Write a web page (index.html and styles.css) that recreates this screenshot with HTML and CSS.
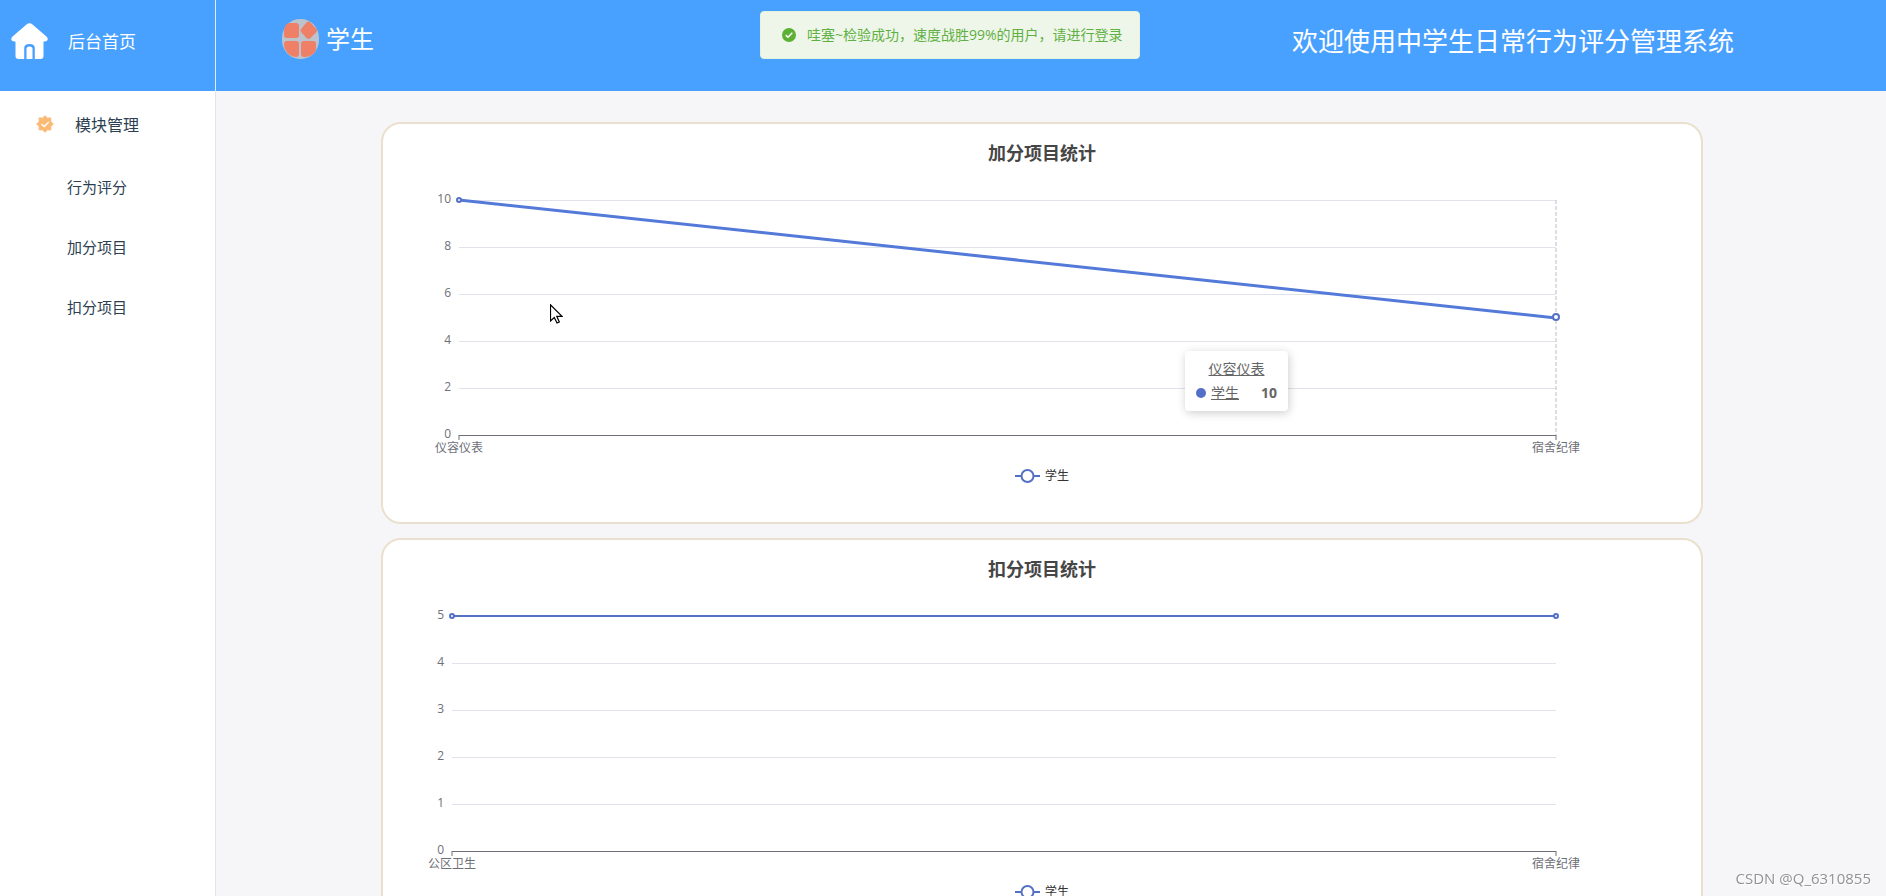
FILE: index.html
```html
<!DOCTYPE html>
<html lang="zh-CN">
<head>
<meta charset="utf-8">
<title>中学生日常行为评分管理系统</title>
<link rel="stylesheet" href="styles.css">
</head>
<body>
<header class="topbar">
  <a class="home" href="#">
    <svg class="home-icon" viewBox="0 0 37 36" aria-hidden="true">
      <path fill="#fff" d="M15.500 1.500Q18.500-1 21.500 1.500L36 14Q38.200 18 34 18.500H32.500V33Q32.500 36 29.500 36H23.800V25Q23.800 21 18.500 21T13.200 25V36H7.500Q4.500 36 4.500 33V18.500H3Q-1.200 18 1 14Z"/>
      <path fill="#fff" d="M15.500 36V26Q15.500 23.500 18.500 23.500T21.500 26V36Z"/>
    </svg>
    <span class="home-text">后台首页</span>
  </a>
  <div class="user">
    <svg class="avatar" viewBox="0 0 37 40" aria-hidden="true">
      <rect width="37" height="40" rx="18" ry="19" fill="#bcc3cc"/>
      <g fill="#ed8066">
        <path d="M7 4H14Q17 4 17 7V16Q17 19 14 19H5Q2 19 2 16V11Q3 5 7 4Z"/>
        <path d="M24.500 3.500Q26.500 1.500 28.500 3.500L34 9.500Q36 11.500 34 13.500L28.500 19Q26.500 21 24.500 19L19.500 13.500Q17.500 11.500 19.500 9.500Z"/>
        <path d="M5 22H14Q17 22 17 25V35Q17 38 14 38Q6 37 3 30Q2 28 2 25Q2 22 5 22Z"/>
        <path d="M22 22H31Q34 22 34 25V31Q31 38 22 38Q19 38 19 35V25Q19 22 22 22Z"/>
      </g>
    </svg>
    <span class="user-name">学生</span>
  </div>
  <h1 class="welcome">欢迎使用中学生日常行为评分管理系统</h1>
</header>

<div class="layout">
  <nav class="sidebar">
    <div class="menu-title">
      <svg class="badge-icon" viewBox="0 0 18 18" aria-hidden="true">
        <path fill="#fab974" stroke="#fab974" stroke-linejoin="round" d="M9 .7 11.200 3.200 14.600 2.900 14.800 6.500 17.300 9 14.800 11.500 14.900 14.900 11.400 14.800 9 17.300 6.600 14.800 3.100 14.900 3.200 11.500.7 9 3.200 6.500 3.100 2.900 6.700 3.200Z"/>
        <path fill="none" stroke="#fff" stroke-width="1.400" d="m5.500 9 2.700 2.600 4.600-4.500"/>
      </svg>
      <span>模块管理</span>
    </div>
    <a class="menu-item" href="#">行为评分</a>
    <a class="menu-item" href="#">加分项目</a>
    <a class="menu-item" href="#">扣分项目</a>
  </nav>

  <main class="content">
    <section class="card">
      <h2 class="card-title">加分项目统计</h2>
      <div class="plot">
        <svg class="chart" aria-label="加分项目统计">
          <g class="grid-line">
            <line x2="100%" y1="0.5" y2="0.5"/><line x2="100%" y1="47.5" y2="47.5"/><line x2="100%" y1="94.5" y2="94.5"/><line x2="100%" y1="141.5" y2="141.5"/><line x2="100%" y1="188.5" y2="188.5"/>
          </g>
          <g class="axis-line"><line x2="100%" y1="235.5" y2="235.5"/><line x1="0" x2="0" y1="235" y2="240"/><line x1="100%" x2="100%" y1="235" y2="240"/></g>
          <line class="pointer-line" x1="100%" x2="100%" y1="0" y2="235"/>
          <g class="y-label"><text x="-8" y="3">10</text><text x="-8" y="50">8</text><text x="-8" y="97">6</text><text x="-8" y="144">4</text><text x="-8" y="191">2</text><text x="-8" y="238">0</text></g>
          <g class="x-label"><text x="0" y="252">仪容仪表</text><text x="100%" y="252">宿舍纪律</text></g>
          <line class="series series-active" x1="0" x2="100%" y1="0" y2="118"/>
          <circle class="point" cx="0" cy="0" r="2"/>
          <circle class="point" cx="100%" cy="117" r="3"/>
        </svg>
        <div class="tooltip">
          <div class="tooltip-title">仪容仪表</div>
          <div class="tooltip-row"><span class="dot"></span><span class="tooltip-name">学生</span><b>10</b></div>
        </div>
        <svg class="cursor" viewBox="0 0 13 20" aria-hidden="true"><path fill="#fff" stroke="#000" stroke-width="1.200" d="M.5.800V17L4.300 13.500 7 19 9.300 18 6.800 12.300H12Z"/></svg>
      </div>
      <div class="legend">
        <svg class="legend-icon" viewBox="0 0 25 14" aria-hidden="true"><path d="M0 7H25"/><circle cx="12.500" cy="7" r="6"/></svg>
        <span>学生</span>
      </div>
    </section>

    <section class="card">
      <h2 class="card-title">扣分项目统计</h2>
      <div class="plot plot-narrow-axis">
        <svg class="chart" aria-label="扣分项目统计">
          <g class="grid-line">
            <line x2="100%" y1="0.5" y2="0.5"/><line x2="100%" y1="47.5" y2="47.5"/><line x2="100%" y1="94.5" y2="94.5"/><line x2="100%" y1="141.5" y2="141.5"/><line x2="100%" y1="188.5" y2="188.5"/>
          </g>
          <g class="axis-line"><line x2="100%" y1="235.5" y2="235.5"/><line x1="0" x2="0" y1="235" y2="240"/><line x1="100%" x2="100%" y1="235" y2="240"/></g>
          <g class="y-label"><text x="-8" y="3">5</text><text x="-8" y="50">4</text><text x="-8" y="97">3</text><text x="-8" y="144">2</text><text x="-8" y="191">1</text><text x="-8" y="238">0</text></g>
          <g class="x-label"><text x="0" y="252">公区卫生</text><text x="100%" y="252">宿舍纪律</text></g>
          <line class="series" x1="0" x2="100%" y1="0" y2="0"/>
          <circle class="point" cx="0" cy="0" r="2"/>
          <circle class="point" cx="100%" cy="0" r="2"/>
        </svg>
      </div>
      <div class="legend">
        <svg class="legend-icon" viewBox="0 0 25 14" aria-hidden="true"><path d="M0 7H25"/><circle cx="12.500" cy="7" r="6"/></svg>
        <span>学生</span>
      </div>
    </section>
  </main>
</div>

<div class="toast" role="alert">
  <svg class="toast-icon" viewBox="0 0 14 14" aria-hidden="true"><circle cx="7" cy="7" r="7" fill="#5cb135"/><path fill="none" stroke="#fff" stroke-width="1.500" d="m3.700 7.100 2.300 2.200 4.300-4.500"/></svg>
  <span>哇塞~检验成功，速度战胜99%的用户，请进行登录</span>
</div>
<div class="watermark">CSDN @Q_6310855</div>
</body>
</html>
```

FILE: styles.css
```css
* {
  box-sizing: border-box;
}

body {
  margin: 0;
  height: 100vh;
  display: flex;
  flex-direction: column;
  overflow: hidden;
  background: #f6f6f9;
  color: #2c3e50;
  font-family: "Open Sans", "Noto Sans CJK SC", sans-serif;
  font-size: 14px;
}

a {
  color: inherit;
  text-decoration: none;
}

h1,
h2 {
  margin: 0;
}

svg {
  display: block;
  flex: none;
}

.topbar {
  flex: none;
  display: flex;
  height: 91px;
  background: #48a0ff;
  color: #fff;
}

.home {
  display: flex;
  align-items: center;
  gap: 20px;
  width: 216px;
  padding: 0 0 9px 11px;
  border-right: 1px solid #dcecff;
  font-size: 17px;
}

.home-text {
  padding-bottom: 2px;
}

.home-icon {
  width: 37px;
  height: 36px;
}

.user {
  display: flex;
  align-items: center;
  gap: 7px;
  padding: 0 0 13px 66px;
  font-size: 24px;
}

.user-name {
  padding-bottom: 4px;
}

.avatar {
  width: 37px;
  height: 40px;
}

.welcome {
  margin-left: auto;
  padding-right: 152px;
  font-size: 26px;
  font-weight: 400;
  line-height: 82px;
  white-space: nowrap;
}

.layout {
  flex: 1;
  display: flex;
  min-height: 0;
}

.sidebar {
  flex: none;
  width: 216px;
  background: #fff;
  border-right: 1px solid #e4e4e8;
}

.menu-title {
  display: flex;
  align-items: center;
  gap: 21px;
  height: 66px;
  padding-left: 36px;
  font-size: 16px;
}

.badge-icon {
  width: 18px;
  height: 18px;
}

.menu-item {
  display: block;
  padding-left: 67px;
  font-size: 15px;
  line-height: 60px;
}

.content {
  flex: 1;
  display: flex;
  flex-direction: column;
  gap: 14px;
  padding: 31px 183px 0 165px;
  overflow: hidden;
}

.card {
  flex: none;
  padding: 17px 0 39px;
  background: #fff;
  border: 2px solid #ebe0cd;
  border-radius: 20px;
}

.card-title {
  color: #464646;
  font-size: 18px;
  font-weight: 700;
  line-height: 24px;
  text-align: center;
}

.plot {
  position: relative;
  margin: 35px 145px 33px 76px;
}

.plot-narrow-axis {
  margin-left: 69px;
}

.chart {
  width: 100%;
  height: 236px;
  overflow: visible;
  font-size: 12px;
  fill: #6e7079;
}

.grid-line {
  stroke: #e0e3ec;
}

.axis-line {
  stroke: #6e7079;
}

.pointer-line {
  stroke: #b9bec9;
  stroke-dasharray: 4 2;
}

.y-label {
  text-anchor: end;
}

.x-label {
  text-anchor: middle;
}

.series {
  stroke: #5470c6;
  stroke-width: 2;
}

.series-active {
  stroke: #5379d9;
  stroke-width: 3;
}

.point {
  fill: #fff;
  stroke: #5470c6;
  stroke-width: 2;
}

.tooltip {
  position: absolute;
  top: 151px;
  right: 268px;
  width: 103px;
  padding: 6px 11px;
  background: #fff;
  border-radius: 4px;
  box-shadow: 1px 2px 10px rgba(0, 0, 0, 0.2);
  color: #666;
  line-height: 24px;
}

.tooltip-title {
  text-align: center;
  text-decoration: underline;
}

.tooltip-row {
  display: flex;
  align-items: center;
}

.tooltip-row b {
  margin-left: auto;
}

.tooltip-name {
  text-decoration: underline;
}

.dot {
  width: 10px;
  height: 10px;
  margin-right: 5px;
  border-radius: 50%;
  background: #5470c6;
}

.cursor {
  position: absolute;
  top: 104px;
  left: 91px;
  width: 13px;
  height: 20px;
}

.legend {
  display: flex;
  align-items: center;
  justify-content: center;
  gap: 5px;
  height: 14px;
  color: #333;
  font-size: 12px;
}

.legend span {
  padding-bottom: 2px;
}

.legend-icon {
  width: 25px;
  height: 14px;
  fill: #fff;
  stroke: #5470c6;
  stroke-width: 2;
}

.toast {
  position: fixed;
  top: 11px;
  left: 50%;
  display: flex;
  align-items: center;
  gap: 11px;
  width: 380px;
  height: 48px;
  margin-left: -183px;
  padding-left: 21px;
  border: 1px solid #e1f3d8;
  border-radius: 4px;
  background: #eef6e9;
  color: #5fb043;
  white-space: nowrap;
}

.toast span {
  padding-bottom: 2px;
}

.toast-icon {
  width: 14px;
  height: 14px;
}

.watermark {
  position: fixed;
  right: 15px;
  bottom: 8px;
  color: #929295;
  font-size: 15px;
  line-height: 20px;
  text-shadow: 1px 1px 0 #fff;
}
```
